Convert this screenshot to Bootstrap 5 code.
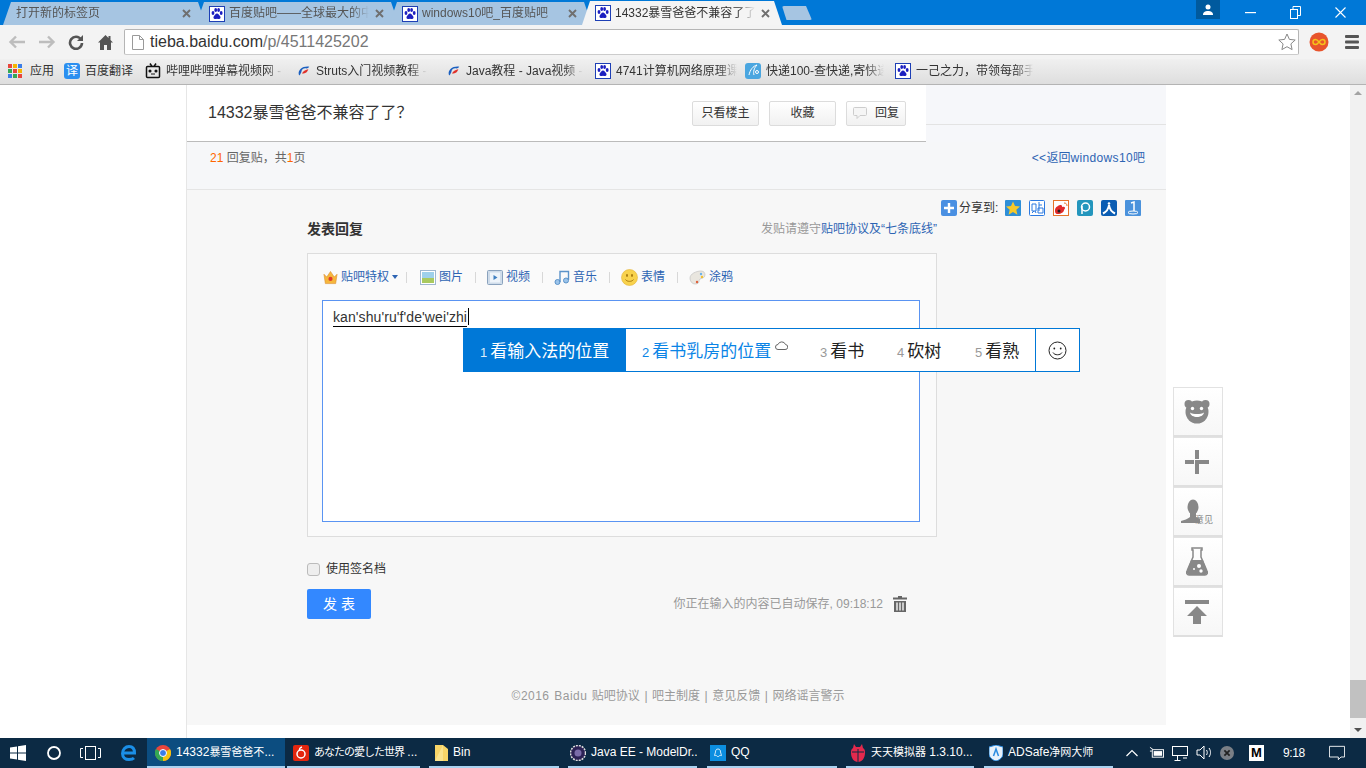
<!DOCTYPE html>
<html lang="zh"><head><meta charset="utf-8"><title>14332暴雪爸爸不兼容了了？</title>
<link href="https://cdn.jsdelivr.net/npm/bootstrap@5.3.0/dist/css/bootstrap.min.css" rel="stylesheet">
<style>
html,body{height:100%;overflow:hidden}
body{width:1366px;height:768px;font:12px/1.4 "Liberation Sans","Noto Sans CJK SC",sans-serif;color:#333;background:#fff}
svg{display:block;flex:none}
.tabstrip{height:25px;background:#0078d7;padding-left:3px;position:relative}
.ctab{width:203px;height:23px;margin-top:2px;margin-right:-10px;background:#a6c5e2;clip-path:polygon(0 100%,8px 0,calc(100% - 8px) 0,100% 100%);padding:0 15px 0 13px;color:#555;position:relative;flex:none}
.ctab.on{width:200px;height:24px;margin-top:1px;background:#f4f4f4;color:#333;margin-right:0;z-index:2;padding-right:12px}
.ctab .ttl{flex:1;min-width:0;white-space:nowrap;overflow:hidden;margin-left:4px;-webkit-mask-image:linear-gradient(90deg,#000 88%,transparent);mask-image:linear-gradient(90deg,#000 88%,transparent)}
.ctab .plain{margin-left:0}
.xsvg{margin-left:6px}
.newtab{width:30px;height:14px;margin-top:6px;background:#a6c5e2;clip-path:polygon(0 0,80% 0,100% 100%,15% 100%);border-radius:2px;flex:none}
.winbtns{position:absolute;right:3px;top:0;height:25px}
.userbtn{width:24px;height:19px;background:#005a9e;margin-right:8px}
.wbtn{width:45px;height:25px}
.toolrow{height:34px;background:#f3f3f3;padding:4px 0 4px 8px}
.navic{width:30px}
.addr{position:relative;width:1175px;height:26px;margin-left:-4px;background:#fff;border:1px solid #b5b5b5;border-bottom-color:#ccc;border-radius:2px;padding:0 2px 0 7px;font-size:16px;color:#333}
.addr .dim{color:#777}
.addrtxt{margin-left:6px}
.endic{margin-left:10px}
.bookrow{height:26px;background:linear-gradient(#f0f0f0,#dedede);border-bottom:1px solid #b4b4b4;padding-left:8px;overflow:hidden}
.bm{flex:none;white-space:nowrap;overflow:hidden;color:#333}
.bm>span{margin-left:5px;display:block;flex:1;min-width:0;overflow:hidden}
.bm .fd{-webkit-mask-image:linear-gradient(90deg,#000 85%,transparent);mask-image:linear-gradient(90deg,#000 85%,transparent)}
.b1{width:56px}.b2{width:81px}.b3{width:152px;padding-right:14px}.b4{width:150px;padding-right:20px}.b5{width:148px;padding-right:12px}.b6{width:150px;padding-right:8px}.b7{width:150px;padding-right:11px}.b8{width:138px}
.yi{width:16px;height:16px;border-radius:3px;background:#2b8ff0;color:#fff;font-size:12px;line-height:16px;text-align:center;margin:0!important;flex:none;overflow:visible}
.pagearea{flex:1;min-height:0;position:relative}
.gut{width:187px;border-right:1px solid #e6e6e6;flex:none}
.maincol{width:979px;flex:none;height:640px;background:#f7f7f7}
.rightcol{flex:1;position:relative}
.scrollb{width:16px;flex:none;background:#f1f1f1;position:relative}
.thumb{position:absolute;left:0;right:0;top:595px;height:38px;background:#c1c1c1}
.sarrow{position:absolute;left:4px;width:0;height:0;border:4px solid transparent}
.sarrow.up{top:2px;border-bottom-color:#a3a3a3}
.sarrow.dn{bottom:2px;border-top-color:#505050}
.titlerow{height:57px;background:#f6f7fa}
.titlecard{width:739px;height:57px;background:#fff;border-bottom:1px solid #bbb;padding:0 20px 0 21px}
.ttxt{font-size:16px;color:#333}
.restfill{height:40px;flex:1;border-bottom:1px solid #e3e3e3}
.pbtn{height:25px;width:67px;margin-left:10px;background:linear-gradient(#fff,#f1f1f1);border:1px solid #dcdcdc;border-radius:2px;color:#333;font-size:12px;padding:0;line-height:23px}
.pbtn.sm{width:60px}
.metarow{height:48px;background:#f6f7f9;border-bottom:1px solid #e5e5e5;padding:8px 21px 0 23px;color:#666}
.org{color:#f60}
.lnk{color:#2d64b3;text-decoration:none}
.wide{letter-spacing:.35px}
.reply{padding-top:10px;height:535px}
.sharerow{height:16px;padding-right:25px;gap:8px;font-size:12px}
.sharerow .lab{margin:0 -2px 0 -6px;color:#333;width:40px;white-space:nowrap}
.replyarea{width:630px;margin-left:120px}
.headrow{height:27px}
.h-lab{font-size:14px;font-weight:700;color:#333}
.gr{color:#999}
.editbox{margin-top:10px;height:284px;background:#fafafa;border:1px solid #ddd;padding:0 16px 0 14px;position:relative}
.etool{height:46px;color:#2d64b3}
.etool .lb{margin-left:3px}
.crown{margin-left:1px}
.tsep{width:1px;height:11px;background:#d8d8d8;margin:0 11px 0 12px}
.tsep.first{margin-right:13px}
.caretd{width:0;height:0;border:3.5px solid transparent;border-top:4px solid #2d64b3;border-bottom:0;margin-left:3px;margin-right:-4px}
.inputbox{height:222px;background:#fff;border:1px solid #5a94f2;padding:7px 10px;font-size:14px;line-height:18px;color:#333}
.comp{border-bottom:1px solid #000;display:inline-block;line-height:17px;height:18px;letter-spacing:.09px}
.cursorbar{display:inline-block;width:1px;height:17px;background:#000;vertical-align:top;margin-left:1px}
.ime{position:absolute;left:155px;top:74px;width:617px;height:44px;border:1px solid #0078d7;background:#fff;font:17px/42px "Noto Sans CJK SC","Liberation Sans",sans-serif;color:#222;white-space:nowrap}
.cand{height:100%;padding-left:16px}
.cand i{font:13px "Liberation Sans",sans-serif;color:#999;margin-right:3px;font-style:normal}
.cand.act{width:162px;background:#0078d7;color:#fff}
.cand.act i{color:#dcecfa}
.cand.two{width:178px;color:#0a84e6}
.cand.two i{color:#0a84e6}
.c3{width:77px}.c4{width:78px}.c5{width:76px}
.cloud{margin:12px 0 0 4px}
.imeface{flex:1;border-left:1px solid #0078d7;height:100%}
.sigrow{margin-top:22px;height:20px}
.sigrow .form-check-input{width:13px;height:13px;margin:0;background-color:#eee;border:1px solid #bbb;border-radius:3px}
.sigrow label{margin-left:6px;color:#333;padding-top:1px}
.sendrow{margin-top:10px;height:30px}
.sendbtn{width:64px;height:30px;background:#3388ff;border:0;border-radius:2px;color:#fff;font-size:14px;padding:0;letter-spacing:0}
.savetxt{color:#999;margin-right:10px}
.trashw{margin-right:30px}
.footline{margin-top:67px;height:20px;color:#999;line-height:20px;padding-left:3px;word-spacing:1.2px}
.footline b{font-weight:400;letter-spacing:.45px}
.sidepanel{position:absolute;left:7px;top:302px;width:50px}
.sidebtn{height:50px;background:linear-gradient(#fff,#f7f7f7);border:1px solid #e2e2e2;border-bottom:2px solid #dfdfdf;position:relative;padding-right:2px}
.tinytxt{position:absolute;left:21px;top:27px;font-size:9px;line-height:10px;color:#888;white-space:nowrap}
.taskbar{height:30px;background:#0c2a44;color:#fff;position:relative}
.tstart{width:147px;padding-left:10px;flex:none}
.ts1{margin-right:21px}.ts2{margin-right:19px}.ts3{margin-right:20px}
.titem{height:30px;flex:none;border-bottom:2px solid #a9d2f0;padding-top:1px;padding-left:6px;white-space:nowrap;overflow:hidden;font-size:12px}
.titem span{margin-left:5px}
.titem i{font-style:normal;font-size:11px}
.titem .jp{letter-spacing:-1px}
.titem.active{background:#0c4d80;padding-left:8px}
.t1{width:138px;margin-right:2px}.t2{width:133px;margin-right:9px}.t3{width:130px;margin-right:9px}.t4{width:129px;margin-right:10px;padding-left:2px}.t5{width:130px;margin-right:9px;padding-left:3px}.t6{width:128px;margin-right:10px;padding-left:4px}.t7{width:129px;padding-left:5px}
.tray{flex:1;padding-left:13px}
.tr0{margin-right:11px}
.tr1{margin-right:8px}
.mbox{width:15px;height:16px;background:#fff;color:#000;font-weight:700;font-size:13px;line-height:16px;text-align:center;margin:0 19px 0 15px}
.clock{margin-right:24px;font-size:12px;letter-spacing:-.4px;width:22px;white-space:nowrap}
</style></head>
<body class="d-flex flex-column">
<svg width="0" height="0" class="position-absolute"><defs>
<symbol id="paw" viewBox="0 0 16 16"><rect x=".5" y=".5" width="15" height="15" fill="#fff" stroke="#1d3fb5"/><g fill="#1c1fc0"><ellipse cx="4" cy="7" rx="1.4" ry="2"/><ellipse cx="6.7" cy="4" rx="1.4" ry="2"/><ellipse cx="9.6" cy="4" rx="1.4" ry="2"/><ellipse cx="12.2" cy="7" rx="1.4" ry="2"/><path d="M8 7.500c-1.600 0-2 1.600-3 2.600-1 1.200-.6 3 1 3 .8 0 1.300-.3 2-.3s1.300.3 2 .3c1.600 0 2-1.800 1-3-1-1-1.400-2.600-3-2.600z"/></g></symbol>
<symbol id="swoosh" viewBox="0 0 16 16"><path d="M2 12C1 6 7 2 14 3c-1 1-2 2-3 2-3-1-6 1-6 4l-2 4z" fill="#1a5fc0"/><path d="M6 11c0-2 3-4 7-5-1 3-3 5-7 5z" fill="#e0322c"/></symbol>
<symbol id="xmk" viewBox="0 0 9 9"><path d="M1 1l7 7M8 1L1 8" stroke="#6f6f6f" stroke-width="1.900" fill="none"/></symbol>
</defs></svg>

<div class="tabstrip d-flex align-items-start">
 <div class="ctab d-flex align-items-center"><div class="ttl plain">打开新的标签页</div><svg class="xsvg" width="9" height="9"><use href="#xmk"/></svg></div>
 <div class="ctab d-flex align-items-center"><svg width="16" height="16"><use href="#paw"/></svg><div class="ttl">百度贴吧——全球最大的中</div><svg class="xsvg" width="9" height="9"><use href="#xmk"/></svg></div>
 <div class="ctab d-flex align-items-center"><svg width="16" height="16"><use href="#paw"/></svg><div class="ttl">windows10吧_百度贴吧</div><svg class="xsvg" width="9" height="9"><use href="#xmk"/></svg></div>
 <div class="ctab on d-flex align-items-center"><svg width="16" height="16"><use href="#paw"/></svg><div class="ttl">14332暴雪爸爸不兼容了了</div><svg class="xsvg" width="9" height="9"><use href="#xmk"/></svg></div>
 <div class="newtab"></div>
 <div class="winbtns d-flex align-items-start">
  <div class="userbtn d-flex align-items-center justify-content-center"><svg width="10" height="11" viewBox="0 0 10 11"><circle cx="5" cy="3" r="2.500" fill="#fff"/><path d="M0 11c0-3 2-4 5-4s5 1 5 4z" fill="#fff"/></svg></div>
  <div class="wbtn d-flex align-items-center justify-content-center"><svg width="11" height="2"><rect width="11" height="1.200" fill="#fff"/></svg></div>
  <div class="wbtn d-flex align-items-center justify-content-center"><svg width="11" height="13" viewBox="0 0 11 13" fill="none" stroke="#fff"><rect x=".5" y="3.500" width="7" height="9"/><path d="M3 3V.5h7.500v9H8"/></svg></div>
  <div class="wbtn d-flex align-items-center justify-content-center"><svg width="11" height="11" viewBox="0 0 11 11" stroke="#fff" stroke-width="1.100"><path d="M.5.500l10 10M10.500.500l-10 10"/></svg></div>
 </div>
</div>

<div class="toolrow d-flex align-items-center">
 <div class="navic"><svg width="18" height="14" viewBox="0 0 18 14" fill="none" stroke="#bdbdbd" stroke-width="2.400"><path d="M8 1.500L2.500 7 8 12.500M3 7h14"/></svg></div>
 <div class="navic"><svg width="18" height="14" viewBox="0 0 18 14" fill="none" stroke="#bdbdbd" stroke-width="2.400"><path d="M10 1.500L15.500 7 10 12.500M15 7H1"/></svg></div>
 <div class="navic"><svg width="16" height="16" viewBox="0 0 16 16" fill="none"><path d="M13 5.500A6 6 0 1 0 14 9" stroke="#555" stroke-width="2.600"/><path d="M15 1v6H9z" fill="#555"/></svg></div>
 <div class="navic"><svg width="15" height="15" viewBox="0 0 15 15" fill="#555"><path d="M7.500 0L0 7.500h2V15h4v-5h3v5h4V7.500h2L12.500 5V1h-2v2z"/></svg></div>
 <div class="addr d-flex align-items-center"><svg width="12" height="15" viewBox="0 0 12 15" fill="#fff" stroke="#9a9a9a"><path d="M.5.500h7l4 4v10H.5z"/><path d="M7.500.500v4h4" fill="none"/></svg><span class="addrtxt">tieba.baidu.com<span class="dim">/p/4511425202</span></span>
  <svg class="ms-auto" width="18" height="18" viewBox="0 0 18 18" fill="#fff" stroke="#888"><path d="M9 1l2.400 5.400 5.800.600-4.300 3.900 1.200 5.700L9 13.700l-5.100 2.900 1.200-5.700L.8 7l5.800-.600z"/></svg></div>
 <svg class="endic" width="20" height="20" viewBox="0 0 20 20" fill="none"><circle cx="10" cy="10" r="9.500" fill="#e8542c"/><path d="M10 10c-1.500-2-2-2.500-3.500-2.500a2.500 2.500 0 0 0 0 5C8 12.500 8.500 12 10 10s2-2.500 3.500-2.500a2.500 2.500 0 0 1 0 5C12 12.500 11.500 12 10 10z" stroke="#f5c21a" stroke-width="1.500"/></svg>
 <svg class="ms-3" width="14" height="14" viewBox="0 0 14 14" fill="#555"><rect width="14" height="3" rx="1"/><rect y="5.500" width="14" height="3" rx="1"/><rect y="11" width="14" height="3" rx="1"/></svg>
</div>

<div class="bookrow d-flex align-items-center">
 <div class="bm b1 d-flex align-items-center"><svg width="14" height="14" viewBox="0 0 14 14"><rect width="4" height="4" fill="#e8453c"/><rect x="5" width="4" height="4" fill="#f4b400"/><rect x="10" width="4" height="4" fill="#3a7de8"/><rect y="5" width="4" height="4" fill="#34a853"/><rect x="5" y="5" width="4" height="4" fill="#e8453c"/><rect x="10" y="5" width="4" height="4" fill="#f4b400"/><rect y="10" width="4" height="4" fill="#3a7de8"/><rect x="5" y="10" width="4" height="4" fill="#34a853"/><rect x="10" y="10" width="4" height="4" fill="#e8453c"/></svg><span class="ps-1 ms-1">应用</span></div>
 <div class="bm b2 d-flex align-items-center"><div class="yi">译</div><span>百度翻译</span></div>
 <div class="bm b3 d-flex align-items-center"><svg width="16" height="16" viewBox="0 0 16 16" fill="none" stroke="#111" stroke-width="1.500"><path d="M5 .5l2 3M11 .5l-2 3"/><rect x="1.500" y="3.500" width="13" height="11" rx="1"/><circle cx="5" cy="8" r=".8" fill="#111"/><circle cx="11" cy="8" r=".8" fill="#111"/><path d="M6 11h4" stroke-width="1"/></svg><span class="fd">哔哩哔哩弹幕视频网 -</span></div>
 <div class="bm b4 d-flex align-items-center"><svg width="14" height="14"><use href="#swoosh"/></svg><span class="fd">Struts入门视频教程 -</span></div>
 <div class="bm b5 d-flex align-items-center"><svg width="14" height="14"><use href="#swoosh"/></svg><span class="fd">Java教程 - Java视频 -</span></div>
 <div class="bm b6 d-flex align-items-center"><svg width="16" height="16"><use href="#paw"/></svg><span class="fd">4741计算机网络原理课</span></div>
 <div class="bm b7 d-flex align-items-center"><svg width="16" height="16" viewBox="0 0 16 16"><rect width="16" height="16" rx="3" fill="#4aa6e0"/><path d="M4 12C5 7 8 3 12 2c-3 3-4 7-3 10" fill="none" stroke="#fff"/><circle cx="12" cy="9" r="1.500" fill="none" stroke="#fff"/></svg><span class="fd">快递100-查快递,寄快递</span></div>
 <div class="bm b8 d-flex align-items-center"><svg width="16" height="16"><use href="#paw"/></svg><span class="fd">一己之力，带领每部手</span></div>
</div>

<div class="pagearea d-flex">
 <div class="gut"></div>
 <div class="maincol">
  <div class="titlerow d-flex align-items-start">
   <div class="titlecard d-flex align-items-center">
    <div class="ttxt me-auto">14332暴雪爸爸不兼容了了？</div>
    <button class="pbtn">只看楼主</button><button class="pbtn">收藏</button>
    <button class="pbtn sm d-flex align-items-center justify-content-center"><svg class="me-2" width="14" height="12" viewBox="0 0 14 12" fill="#f5f5f5" stroke="#ccc"><path d="M1.500.500h11a1 1 0 0 1 1 1v6a1 1 0 0 1-1 1H7l-3 3V8.500H1.500a1 1 0 0 1-1-1v-6a1 1 0 0 1 1-1z"/></svg>回复</button>
   </div>
   <div class="restfill"></div>
  </div>
  <div class="metarow d-flex justify-content-between">
   <div><span class="org">21</span> 回复贴，共<span class="org">1</span>页</div>
   <a class="lnk" href="#"><span class="wide">&lt;&lt;</span>返回<span class="wide">windows10</span>吧</a>
  </div>
  <div class="reply">
   <div class="sharerow d-flex justify-content-end align-items-center">
    <svg width="16" height="16" viewBox="0 0 16 16"><rect width="16" height="16" rx="2" fill="#4a90e2"/><path d="M8 3v10M3 8h10" stroke="#fff" stroke-width="2.400"/></svg>
    <span class="lab">分享到:</span>
    <svg width="16" height="16" viewBox="0 0 16 16"><rect width="16" height="16" rx="1" fill="#2e8fd8"/><path d="M8 1.500l2 4.500 5 .5-3.700 3.200 1.100 5L8 12l-4.400 2.700 1.100-5L1 6.500 6 6z" fill="#f6c92a"/></svg>
    <svg width="16" height="16" viewBox="0 0 16 16" fill="none" stroke="#2d7ae0"><rect x=".5" y=".5" width="15" height="15" rx="1" fill="#fff"/><path d="M3 4h4v7H3zM5 11l-2 2M6 11l1 2M10 2v9M10 5h3M9 8h5v5H9z"/></svg>
    <svg width="16" height="16" viewBox="0 0 16 16"><rect x=".5" y=".5" width="15" height="15" fill="#fff" stroke="#e6742a"/><path d="M2 10c0-3 4-5 6-5 1 0 1 1 1 2 3-1 4 1 2 3 0 2-3 4-6 4s-3-2-3-4z" fill="#e02b2b"/><circle cx="6" cy="11" r="1.500" fill="#222"/><path d="M11 3c2 0 3 1 3 3" stroke="#e6742a" fill="none"/></svg>
    <svg width="16" height="16" viewBox="0 0 16 16"><rect width="16" height="16" rx="2" fill="#2496bd"/><circle cx="8.500" cy="7" r="4" fill="none" stroke="#fff" stroke-width="1.500"/><path d="M5 14V6" stroke="#fff" stroke-width="1.500"/></svg>
    <svg width="16" height="16" viewBox="0 0 16 16"><rect width="16" height="16" rx="2" fill="#0b5db3"/><circle cx="8" cy="3.500" r="1.300" fill="#fff"/><path d="M8 5C7.500 9 5 12 2 13.500M8 5c.5 4 3 7 6 8.500" fill="none" stroke="#fff" stroke-width="2"/></svg>
    <svg width="16" height="16" viewBox="0 0 16 16"><rect width="16" height="16" rx="1" fill="#4a92dc"/><path d="M6 3l3-1v9" fill="none" stroke="#fff" stroke-width="1.500"/><ellipse cx="8" cy="12.500" rx="5" ry="1.500" fill="none" stroke="#fff"/></svg>
   </div>
   <div class="replyarea">
    <div class="headrow d-flex justify-content-between align-items-center">
     <div class="h-lab">发表回复</div>
     <div class="gr">发贴请遵守<a class="lnk" href="#">贴吧协议及“七条底线”</a></div>
    </div>
    <div class="editbox">
     <div class="etool d-flex align-items-center">
      <svg class="crown" width="15" height="15" viewBox="0 0 16 15"><path d="M1 4l3 3 4-6 4 6 3-3-1.500 10h-11z" fill="#f6b73c" stroke="#d9892a" stroke-width=".6"/><circle cx="8" cy="9" r="2.200" fill="#e03a2a"/></svg>
      <span class="lb">贴吧特权</span><span class="caretd"></span><span class="tsep first"></span>
      <svg width="16" height="15" viewBox="0 0 16 15"><rect x=".5" y=".5" width="15" height="14" fill="#fff" stroke="#9fb7cf"/><rect x="2" y="2" width="12" height="6" fill="#9ed0ea"/><rect x="2" y="8" width="12" height="5" fill="#a9c95f"/></svg>
      <span class="lb">图片</span><span class="tsep"></span>
      <svg width="16" height="15" viewBox="0 0 16 15"><rect x=".5" y=".5" width="15" height="14" rx="1" fill="#cfdcea" stroke="#8aa2bd"/><rect x="3" y="2.500" width="10" height="10" fill="#eef4fa"/><path d="M6.500 5v5l4-2.500z" fill="#3f7fc0"/></svg>
      <span class="lb">视频</span><span class="tsep"></span>
      <svg width="16" height="16" viewBox="0 0 16 16" fill="#9cc4ea" stroke="#5b93c9"><circle cx="3.500" cy="13" r="2.500"/><circle cx="12" cy="11.500" r="2.500"/><path d="M6 13V2.500h8.500V11" fill="none" stroke-width="1.400"/></svg>
      <span class="lb">音乐</span><span class="tsep"></span>
      <svg width="17" height="17" viewBox="0 0 17 17"><circle cx="8.500" cy="8.500" r="8" fill="#f8d24c" stroke="#e3b43a" stroke-width=".6"/><ellipse cx="6" cy="6.500" rx="1" ry="1.400" fill="#a87b10"/><ellipse cx="11" cy="6.500" rx="1" ry="1.400" fill="#a87b10"/><path d="M4.500 10.500c1.500 2.500 6.500 2.500 8 0" fill="none" stroke="#a87b10"/></svg>
      <span class="lb">表情</span><span class="tsep"></span>
      <svg width="17" height="15" viewBox="0 0 17 15"><path d="M1 8c0-4 6-7 11-7 3 0 4 2 4 4 0 3-3 3-5 4-1 1-1 2-1 3-1 2-3 2-4 2-3 0-5-3-5-6z" fill="#e9e6df" stroke="#bbb" stroke-width=".6"/><circle cx="12" cy="4" r="1.200" fill="#6cb2e8"/><circle cx="13" cy="7" r="1.200" fill="#f0c030"/><circle cx="8" cy="12" r="1.200" fill="#e0603a"/></svg>
      <span class="lb">涂鸦</span>
     </div>
     <div class="inputbox"><span class="comp">kan'shu'ru'f'de'wei'zhi</span><span class="cursorbar"></span></div>
     <div class="ime d-flex">
      <div class="cand act"><i>1</i>看输入法的位置</div>
      <div class="cand two d-flex align-items-start"><span><i>2</i>看书乳房的位置</span><svg class="cloud" width="13" height="9" viewBox="0 0 13 9" fill="none" stroke="#666"><path d="M3 8.500h7a2.500 2.500 0 0 0 .5-5A4 4 0 0 0 3 3.500a2.500 2.500 0 0 0 0 5z"/></svg></div>
      <div class="cand c3"><i>3</i>看书</div>
      <div class="cand c4"><i>4</i>砍树</div>
      <div class="cand c5"><i>5</i>看熟</div>
      <div class="imeface d-flex align-items-center justify-content-center"><svg width="19" height="19" viewBox="0 0 19 19" fill="none" stroke="#222"><circle cx="9.500" cy="9.500" r="8.500"/><circle cx="6.300" cy="7.500" r=".9" fill="#222" stroke="none"/><circle cx="12.700" cy="7.500" r=".9" fill="#222" stroke="none"/><path d="M5 11.500c1.500 3 7.500 3 9 0"/></svg></div>
     </div>
    </div>
    <div class="sigrow d-flex align-items-center"><input class="form-check-input" type="checkbox" id="sig"><label for="sig">使用签名档</label></div>
    <div class="sendrow d-flex align-items-center">
     <button class="btn sendbtn">发 表</button>
     <span class="savetxt ms-auto">你正在输入的内容已自动保存, 09:18:12</span>
     <svg class="trashw" width="14" height="16" viewBox="0 0 14 16" fill="#666"><path d="M5 0h4v1.500h5V3.500H0V1.500h5z"/><path d="M1 5h12v11H1zM3.300 6.500v8h1.400v-8zM6.300 6.500v8h1.400v-8zM9.300 6.500v8h1.400v-8z" fill-rule="evenodd"/></svg>
    </div>
   </div>
   <div class="footline text-center"><b>©2016 Baidu</b> 贴吧协议 | 吧主制度 | 意见反馈 | 网络谣言警示</div>
  </div>
 </div>
 <div class="rightcol">
  <div class="sidepanel">
   <div class="sidebtn d-flex align-items-center justify-content-center"><svg width="26" height="25" viewBox="0 0 26 25" fill="#888"><circle cx="4.500" cy="5" r="4"/><circle cx="21.500" cy="5" r="4"/><circle cx="13" cy="13" r="11.500"/><circle cx="8.500" cy="9.500" r="1.700" fill="#fff"/><circle cx="17.500" cy="9.500" r="1.700" fill="#fff"/><path d="M6 13.500c3 2 11 2 14 0-1 6-13 6-14 0z" fill="#fff"/></svg></div>
   <div class="sidebtn d-flex align-items-center justify-content-center"><svg width="24" height="24" viewBox="0 0 24 24" fill="#888"><rect x="10" width="4" height="9"/><rect x="10" y="10" width="4" height="14"/><rect y="10" width="9" height="4"/><rect x="10" y="10" width="14" height="4"/></svg></div>
   <div class="sidebtn d-flex align-items-center justify-content-center"><svg width="26" height="26" viewBox="0 0 26 26" fill="#888" class="me-2"><ellipse cx="13" cy="8" rx="5.500" ry="7.500"/><path d="M10 14h6v4l4 2v4H1v-2c3-1 7-2 9-4z"/></svg><span class="tinytxt">意见</span></div>
   <div class="sidebtn d-flex align-items-center justify-content-center"><svg width="22" height="29" viewBox="0 0 22 29" fill="#888"><path d="M6 1h10v2h-1v7l6 14c1 2 0 4-2 4H3c-2 0-3-2-2-4l6-14V3H6z" fill="none" stroke="#888" stroke-width="1.500"/><path d="M5 13h12l4 11c.5 2-.5 4-2 4H3c-1.500 0-2.500-2-2-4z"/><circle cx="13" cy="19" r="2" fill="#fff"/><circle cx="15" cy="24" r="1.700" fill="#fff"/><circle cx="8" cy="22" r="1" fill="#fff"/></svg></div>
   <div class="sidebtn d-flex align-items-center justify-content-center"><svg width="24" height="24" viewBox="0 0 24 24" fill="#888"><rect width="24" height="4"/><path d="M12 6l10 10h-6v8H8v-8H2z"/></svg></div>
  </div>
 </div>
 <div class="scrollb"><span class="sarrow up"></span><div class="thumb"></div><span class="sarrow dn"></span></div>
</div>

<div class="taskbar d-flex align-items-center">
 <div class="tstart d-flex align-items-center">
  <svg class="ts1" width="16" height="16" viewBox="0 0 16 16" fill="#fff"><path d="M0 2.500l7-1v6H0zM8 1.300l8-1.300v7.500H8zM0 8.500h7v6l-7-1zM8 8.500h8V16l-8-1.300z"/></svg>
  <svg class="ts2" width="14" height="14" viewBox="0 0 14 14" fill="none" stroke="#fff" stroke-width="1.800"><circle cx="7" cy="7" r="6"/></svg>
  <svg class="ts3" width="21" height="14" viewBox="0 0 21 14" fill="none" stroke="#fff"><rect x="5.500" y=".5" width="10" height="13"/><path d="M3 2.500H.5v9H3M18 2.500h2.500v9H18"/></svg>
  <svg width="16" height="16" viewBox="0 0 16 16" fill="none" stroke="#1b8fe8" stroke-width="3"><path d="M2.500 8h11c0-4-2-6.500-5.500-6.500S1.500 4.500 1.500 8.500 4.500 14.500 8 14.500c2 0 4-.5 5-1.500"/></svg>
 </div>
 <div class="titem t1 active d-flex align-items-center"><svg width="16" height="16" viewBox="0 0 16 16"><circle cx="8" cy="8" r="8" fill="#e8453c"/><path d="M8 8L15 4A8 8 0 0 1 8 16z" fill="#f4c20d"/><path d="M8 8L8 16A8 8 0 0 1 1 4z" fill="#34a853"/><circle cx="8" cy="8" r="3.500" fill="#3a7de8" stroke="#fff"/></svg><span>14332<i>暴雪爸爸不</i>...</span></div>
 <div class="titem t2 d-flex align-items-center"><svg width="16" height="16" viewBox="0 0 16 16"><rect width="16" height="16" rx="2" fill="#e3260f"/><circle cx="8" cy="9" r="4" fill="none" stroke="#fff" stroke-width="1.500"/><path d="M9 2c-2 .5-3 2-2.500 4" fill="none" stroke="#fff" stroke-width="1.300"/></svg><span><i class="jp">あなたの愛した世界</i> ...</span></div>
 <div class="titem t3 d-flex align-items-center"><svg width="13" height="16" viewBox="0 0 13 16"><path d="M0 0h8l5 4v12H0z" fill="#f8d568"/><path d="M8 0v16H0z" fill="#fbe38e"/></svg><span>Bin</span></div>
 <div class="titem t4 d-flex align-items-center"><svg width="16" height="16" viewBox="0 0 16 16"><circle cx="8" cy="8" r="7.500" fill="#2c2255" stroke="#ddd" stroke-width="1.500" stroke-dasharray="2 1"/><circle cx="8" cy="8" r="3.500" fill="#7a6ba8"/></svg><span>Java EE - ModelDr...</span></div>
 <div class="titem t5 d-flex align-items-center"><svg width="16" height="16" viewBox="0 0 16 16"><rect width="16" height="16" fill="#0c8ee0"/><path d="M8 4c-2 0-2.500 1.500-2.500 3L4.500 10.500c.5.500 1 0 1.500-.5.500 1 1 1.500 2 1.500s1.500-.5 2-1.500c.5.500 1 1 1.500.5L10.500 7C10.500 5.500 10 4 8 4z" fill="none" stroke="#fff" stroke-width=".8"/></svg><span>QQ</span></div>
 <div class="titem t6 d-flex align-items-center"><svg width="16" height="18" viewBox="0 0 16 18"><path d="M4 0l2 3h4l2-3 1 4c2 1 2 3 2 5 0 5-3 9-7 9s-7-4-7-9c0-2 0-4 2-5z" fill="#e4294d"/><path d="M8 5v13M2 8h12" stroke="#0c2a44"/></svg><span><i>天天模拟器</i> 1.3.10...</span></div>
 <div class="titem t7 d-flex align-items-center"><svg width="14" height="16" viewBox="0 0 14 16"><path d="M7 0l7 2v7c0 3-3 6-7 7-4-1-7-4-7-7V2z" fill="#e8f2fb" stroke="#2a8be0"/><path d="M4.500 11L7 4l2.500 7" fill="none" stroke="#2a8be0" stroke-width="1.500"/></svg><span>ADSafe<i>净网大师</i></span></div>
 <div class="tray d-flex align-items-center">
  <svg class="tr0" width="12" height="8" viewBox="0 0 12 8" fill="none" stroke="#fff" stroke-width="1.200"><path d="M.5 7L6 1.500 11.500 7"/></svg>
  <svg class="tr1" width="15" height="13" viewBox="0 0 16 13" fill="none" stroke="#fff"><rect x="3.500" y="3.500" width="12" height="8"/><rect x="5" y="5" width="9" height="5" fill="#fff" stroke="none"/><path d="M1 1l3 2M1 5h2"/></svg>
  <svg class="tr1" width="16" height="16" viewBox="0 0 16 16" fill="none" stroke="#fff"><rect x=".5" y="1.500" width="15" height="9"/><path d="M5.500 10.500v5M2.500 15.500h6M11 13h4"/></svg>
  <svg class="tr1" width="16" height="15" viewBox="0 0 16 15" fill="none" stroke="#fff"><path d="M1 5h3l4-4v13l-4-4H1z"/><path d="M10.500 5c1 1.500 1 3.500 0 5M13 3c2 3 2 6 0 9"/></svg>
  <svg width="14" height="14" viewBox="0 0 16 16"><circle cx="8" cy="8" r="8" fill="#7a7f86"/><path d="M5 5l6 6M11 5l-6 6" stroke="#222" stroke-width="2"/></svg>
  <div class="mbox">M</div>
  <div class="clock">9:18</div>
  <svg width="16" height="16" viewBox="0 0 18 18" fill="none" stroke="#fff"><path d="M.5 1.500h17v12h-4l-3 3v-3H.5z"/></svg>
 </div>
</div>
<script src="https://cdn.jsdelivr.net/npm/bootstrap@5.3.0/dist/js/bootstrap.bundle.min.js"></script>
</body></html>
